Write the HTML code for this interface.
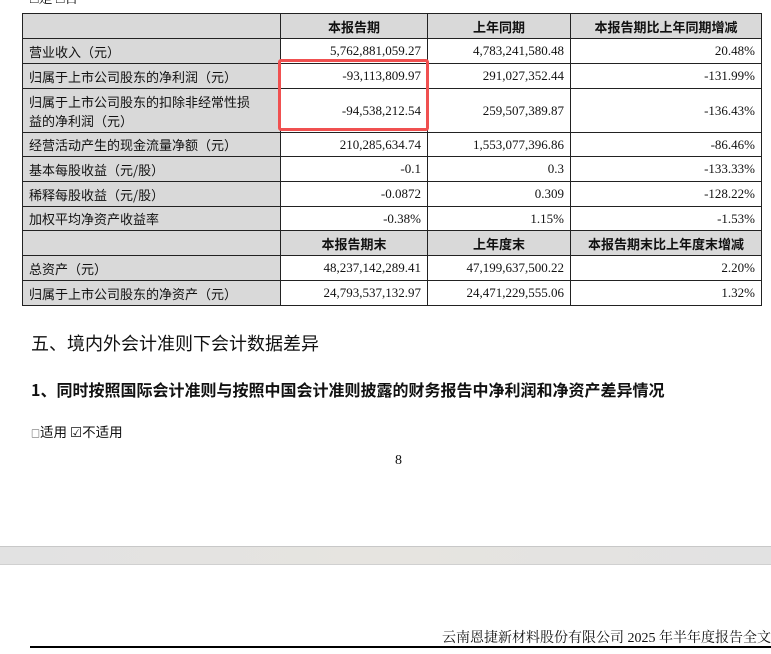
<!DOCTYPE html>
<html><head><meta charset="utf-8"><style>
body{margin:0;width:771px;height:654px;background:#fff;position:relative;overflow:hidden;font-family:"Liberation Serif","Noto Serif CJK SC",serif;color:#111}
table{position:absolute;left:22px;top:13px;border-collapse:collapse;font-size:13px}
td{border:1px solid #222;padding:0 6px;height:23px;text-align:right;white-space:nowrap}
td.l{text-align:left;background:#d9d9d9;font-family:"Noto Sans CJK SC",sans-serif;font-size:13px}
tr.h td{background:#d9d9d9;text-align:center;font-family:"Noto Sans CJK SC",sans-serif;font-weight:bold;font-size:13px}
.abs{position:absolute;white-space:nowrap}
</style></head><body>
<div class="abs" style="left:30px;top:-12px;font-size:14px">□是 □否</div>
<table>
<colgroup><col style="width:258px"><col style="width:147px"><col style="width:143px"><col style="width:191px"></colgroup>
<tr class="h" style="height:25px"><td></td><td>本报告期</td><td>上年同期</td><td>本报告期比上年同期增减</td></tr>
<tr style="height:25px"><td class="l">营业收入（元）</td><td>5,762,881,059.27</td><td>4,783,241,580.48</td><td>20.48%</td></tr>
<tr style="height:25px"><td class="l">归属于上市公司股东的净利润（元）</td><td>-93,113,809.97</td><td>291,027,352.44</td><td>-131.99%</td></tr>
<tr style="height:44px"><td class="l" style="line-height:19px">归属于上市公司股东的扣除非经常性损<br>益的净利润（元）</td><td>-94,538,212.54</td><td>259,507,389.87</td><td>-136.43%</td></tr>
<tr style="height:24px"><td class="l">经营活动产生的现金流量净额（元）</td><td>210,285,634.74</td><td>1,553,077,396.86</td><td>-86.46%</td></tr>
<tr style="height:25px"><td class="l">基本每股收益（元/股）</td><td>-0.1</td><td>0.3</td><td>-133.33%</td></tr>
<tr style="height:25px"><td class="l">稀释每股收益（元/股）</td><td>-0.0872</td><td>0.309</td><td>-128.22%</td></tr>
<tr style="height:24px"><td class="l">加权平均净资产收益率</td><td>-0.38%</td><td>1.15%</td><td>-1.53%</td></tr>
<tr class="h" style="height:25px"><td></td><td>本报告期末</td><td>上年度末</td><td>本报告期末比上年度末增减</td></tr>
<tr style="height:25px"><td class="l">总资产（元）</td><td>48,237,142,289.41</td><td>47,199,637,500.22</td><td>2.20%</td></tr>
<tr style="height:25px"><td class="l">归属于上市公司股东的净资产（元）</td><td>24,793,537,132.97</td><td>24,471,229,555.06</td><td>1.32%</td></tr>
</table>
<div class="abs" style="left:278px;top:59px;width:145px;height:66px;border:3px solid #f05050;border-radius:3px"></div>
<div class="abs" style="left:31px;top:330px;font-size:18px;font-family:'Noto Sans CJK SC',sans-serif">五、境内外会计准则下会计数据差异</div>
<div class="abs" style="left:31px;top:377px;font-size:16px;font-weight:bold;font-family:'Noto Sans CJK SC',sans-serif">1、同时按照国际会计准则与按照中国会计准则披露的财务报告中净利润和净资产差异情况</div>
<div class="abs" style="left:31px;top:421px;font-size:13.5px;font-family:'Noto Sans CJK SC',sans-serif"><span style="font-size:9px">□</span>适用 ☑不适用</div>
<div class="abs" style="left:395px;top:453px;font-size:14px">8</div>
<div class="abs" style="left:0;top:546px;width:771px;height:17px;background:linear-gradient(90deg,#e2e2e2,#e6e4e0,#e2e2e2);border-top:1px solid #c8c8c8;border-bottom:1px solid #d0d0d0"></div>
<div class="abs" style="right:0;top:627px;font-size:14px;font-family:'Liberation Serif','Noto Serif CJK SC',serif">云南恩捷新材料股份有限公司 2025 年半年度报告全文</div>
<div class="abs" style="left:30px;top:646px;width:741px;height:2px;background:#000"></div>
</body></html>
